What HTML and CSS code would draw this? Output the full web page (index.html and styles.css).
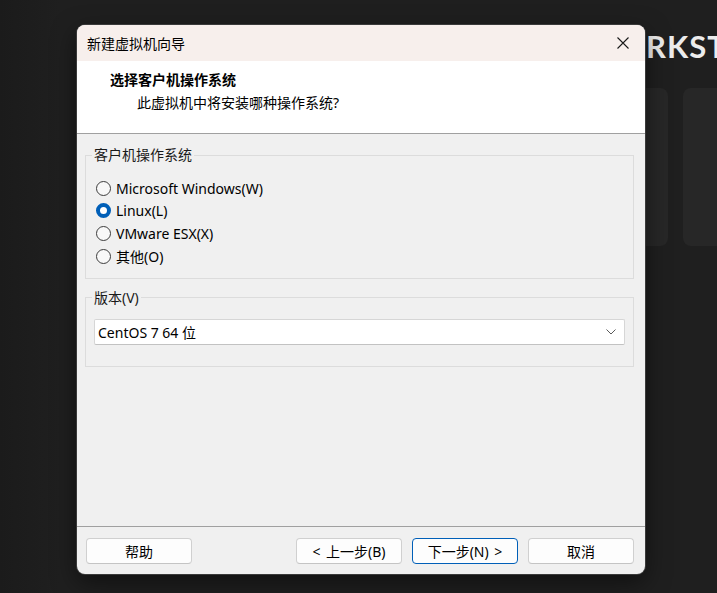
FILE: index.html
```html
<!DOCTYPE html>
<html lang="zh-CN">
<head>
<meta charset="utf-8">
<title>新建虚拟机向导</title>
<link rel="stylesheet" href="styles.css">
</head>
<body>
<div class="desktop">
  <div class="app-title">RKST</div>
  <div class="card card-a"></div>
  <div class="card card-b"></div>

  <div class="dialog">
    <div class="titlebar">
      <span class="title-text">新建虚拟机向导</span>
      <svg class="close" width="14" height="14" viewBox="0 0 14 14"><path d="M1.5 1.5 L12.5 12.5 M12.5 1.5 L1.5 12.5" stroke="#1a1a1a" stroke-width="1.1" fill="none"/></svg>
    </div>
    <div class="header">
      <div class="h-title">选择客户机操作系统</div>
      <div class="h-sub">此虚拟机中将安装哪种操作系统?</div>
    </div>
    <div class="body">
      <fieldset class="group group-os">
        <legend class="legend">客户机操作系统</legend>
        <div class="radio-row"><span class="radio"></span><span>Microsoft Windows(W)</span></div>
        <div class="radio-row"><span class="radio checked"></span><span>Linux(L)</span></div>
        <div class="radio-row"><span class="radio"></span><span>VMware ESX(X)</span></div>
        <div class="radio-row"><span class="radio"></span><span>其他(O)</span></div>
      </fieldset>
      <fieldset class="group group-ver">
        <legend class="legend">版本(V)</legend>
        <div class="combo">
          <span class="combo-text">CentOS 7 64 位</span>
          <svg class="chev" width="10" height="6" viewBox="0 0 10 6"><path d="M0.5 0.5 L5 5 L9.5 0.5" stroke="#5a5a5a" stroke-width="1" fill="none"/></svg>
        </div>
      </fieldset>
    </div>
    <div class="footer">
      <button class="btn">帮助</button>
      <div class="spacer"></div>
      <button class="btn">&lt; 上一步(B)</button>
      <button class="btn btn-primary">下一步(N) &gt;</button>
      <button class="btn">取消</button>
    </div>
  </div>
</div>
</body>
</html>
```
FILE: styles.css
```css
* { box-sizing: border-box; }
html, body { margin: 0; padding: 0; }
body {
  width: 717px;
  height: 593px;
  overflow: hidden;
  background: #1e1e1e;
  font-family: "Noto Sans", "Noto Sans CJK SC", sans-serif;
  font-size: 14px;
  color: #000;
}
.desktop {
  position: relative;
  width: 717px;
  height: 593px;
  overflow: hidden;
  background: linear-gradient(90deg, #1b1b1b 0px, #1f1f1f 60px, #1f1f1f 100%);
}
.app-title {
  position: absolute;
  left: 646px;
  top: 27px;
  font-family: "Lato", "Noto Sans", sans-serif;
  font-weight: 700;
  font-size: 31px;
  letter-spacing: 1px;
  color: #ececec;
  white-space: nowrap;
}
.card {
  position: absolute;
  top: 88px;
  height: 158px;
  background: #272727;
  border-radius: 8px;
}
.card-a { left: 530px; width: 138px; }
.card-b { left: 683px; width: 138px; }

.dialog {
  position: absolute;
  left: 77px;
  top: 25px;
  width: 568px;
  height: 549px;
  border-radius: 8px;
  overflow: hidden;
  background: #f0f0f0;
  display: flex;
  flex-direction: column;
  box-shadow: 0 0 0 1px #3a3a3a, 0 8px 24px rgba(0,0,0,0.5);
}
.titlebar {
  height: 36px;
  flex: none;
  background: #f7efec;
  display: flex;
  align-items: center;
  justify-content: space-between;
  padding: 0 15px 0 10px;
}
.title-text { font-size: 14px; }
.close { display: block; }

.header {
  height: 73px;
  flex: none;
  background: #fff;
  border-bottom: 1px solid #a0a0a0;
  padding: 9px 0 0 33px;
  display: flex;
  flex-direction: column;
}
.h-title {
  font-weight: 700;
  line-height: 20px;
}
.h-sub {
  line-height: 20px;
  margin-top: 3px;
  padding-left: 27px;
}

.body {
  flex: 1;
  padding: 11px 11px 0 8px;
  display: flex;
  flex-direction: column;
}
.group {
  margin: 0;
  border: 1px solid #dcdcdc;
  padding: 0 8px;
  min-width: 0;
}
.legend {
  padding: 0 2px;
  line-height: 20px;
  color: #1a1a1a;
}
.group-os { padding-top: 12px; padding-bottom: 10px; padding-left: 10px; }
.group-os .legend { margin-left: -4px; }
.group-ver { margin-top: 9px; padding-top: 11px; padding-bottom: 21px; }
.group-ver .legend { margin-left: -2px; }

.radio-row {
  height: 22.67px;
  display: flex;
  align-items: center;
  gap: 5px;
  white-space: nowrap;
}
.radio {
  width: 15px;
  height: 15px;
  border-radius: 50%;
  border: 1px solid #3c3c3c;
  background: #f8f8f8;
  flex: none;
}
.radio.checked {
  border: 4.5px solid #005fb8;
  background: #fff;
}

.combo {
  height: 26px;
  background: #fff;
  border: 1px solid #d6d6d6;
  border-bottom-color: #c2c2c2;
  border-radius: 2px;
  display: flex;
  align-items: center;
  justify-content: space-between;
  padding: 0 8px 0 3px;
}
.chev { display: block; }

.footer {
  flex: none;
  border-top: 1px solid #a0a0a0;
  padding: 11px 11px 10px 9px;
  display: flex;
  gap: 10px;
}
.spacer { flex: 1; }
.btn {
  width: 106px;
  height: 26px;
  font-family: inherit;
  font-size: 14px;
  color: #000;
  background: #fdfdfd;
  border: 1px solid #d0d0d0;
  border-bottom-color: #c4c4c4;
  border-radius: 4px;
  padding: 0;
  word-spacing: 2px;
}
.btn-primary {
  border: 1px solid #005fb8;
}
```
